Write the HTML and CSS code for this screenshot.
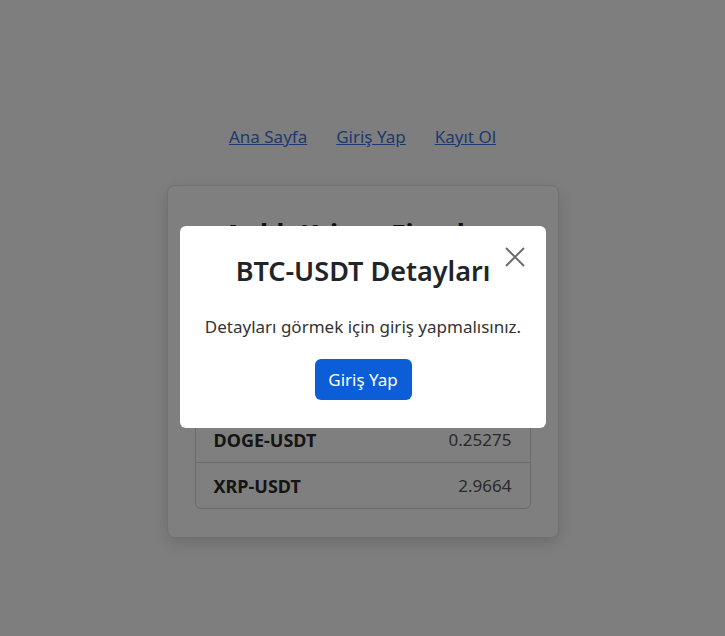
FILE: index.html
```html
<!DOCTYPE html>
<html lang="tr">
<head>
<meta charset="utf-8">
<title>Anlık Kripto Fiyatları</title>
<link rel="stylesheet" href="styles.css">
</head>
<body>
<nav class="nav">
  <a href="#">Ana Sayfa</a>
  <a href="#">Giriş Yap</a>
  <a href="#">Kayıt Ol</a>
</nav>
<main class="card">
  <h2 class="card-title">Anlık Kripto Fiyatları</h2>
  <div class="prices">
    <div class="row"><span class="sym">BTC-USDT</span><span class="price">104250.1</span></div>
    <div class="row"><span class="sym">ETH-USDT</span><span class="price">3285.42</span></div>
    <div class="row"><span class="sym">SOL-USDT</span><span class="price">255.31</span></div>
    <div class="row"><span class="sym">DOGE-USDT</span><span class="price">0.25275</span></div>
    <div class="row"><span class="sym">XRP-USDT</span><span class="price">2.9664</span></div>
  </div>
</main>
<div class="backdrop"></div>
<div class="modal">
  <button class="close" aria-label="Kapat">
    <svg width="20" height="20" viewBox="0 0 20 20"><path d="M1 1L19 19M19 1L1 19" stroke="#6e6e6e" stroke-width="2" fill="none"/></svg>
  </button>
  <h2 class="modal-title">BTC-USDT Detayları</h2>
  <p class="modal-text">Detayları görmek için giriş yapmalısınız.</p>
  <button class="btn">Giriş Yap</button>
</div>
</body>
</html>
```

FILE: styles.css
```css
* { box-sizing: border-box; }
html, body { margin: 0; padding: 0; }
body {
  font-family: "Noto Sans", "Open Sans", sans-serif;
  background: #fdfdfd;
  color: #333;
  min-height: 636px;
}
.nav {
  display: flex;
  justify-content: center;
  gap: 29px;
  padding-top: 125px;
  font-size: 17px;
  line-height: 24px;
}
.nav a {
  color: #3a74e0;
  text-decoration: underline;
}
.card {
  width: 392px;
  margin: 36px auto 0;
  background: #fff;
  border: 1px solid #e2e2e2;
  border-radius: 8px;
  box-shadow: 0 5px 16px rgba(0,0,0,0.15);
  padding: 32px 27px 28px;
}
.card-title {
  margin: 0 0 28px;
  text-align: center;
  font-size: 27px;
  line-height: 32px;
  font-weight: 700;
  color: #222;
}
.prices {
  border: 1px solid #d6d6d6;
  border-radius: 6px;
}
.row {
  display: flex;
  justify-content: space-between;
  align-items: center;
  height: 46px;
  padding: 0 18px;
  font-size: 17px;
  border-top: 1px solid #d6d6d6;
}
.row:first-child { border-top: none; height: 45px; }
.sym { font-weight: 700; color: #2a2a2a; font-size: 18px; }
.price { color: #555; }
.backdrop {
  position: fixed;
  inset: 0;
  background: rgba(0,0,0,0.5);
}
.modal {
  position: fixed;
  top: 226px;
  left: 180px;
  width: 366px;
  height: 202px;
  background: #fff;
  border-radius: 6px;
  text-align: center;
  padding-top: 27px;
}
.close {
  position: absolute;
  top: 21px;
  right: 21px;
  width: 20px;
  height: 20px;
  padding: 0;
  border: none;
  background: none;
  display: flex;
}
.modal-title {
  margin: 0;
  font-size: 27px;
  line-height: 36px;
  font-weight: 600;
  color: #212529;
}
.modal-text {
  margin: 26px 0 0;
  font-size: 17px;
  line-height: 24px;
  color: #333;
}
.btn {
  margin-top: 20px;
  width: 97px;
  height: 41px;
  border: none;
  border-radius: 6px;
  background: #0b5ed7;
  color: #fff;
  font-family: inherit;
  font-size: 17px;
  padding: 0;
}
```
